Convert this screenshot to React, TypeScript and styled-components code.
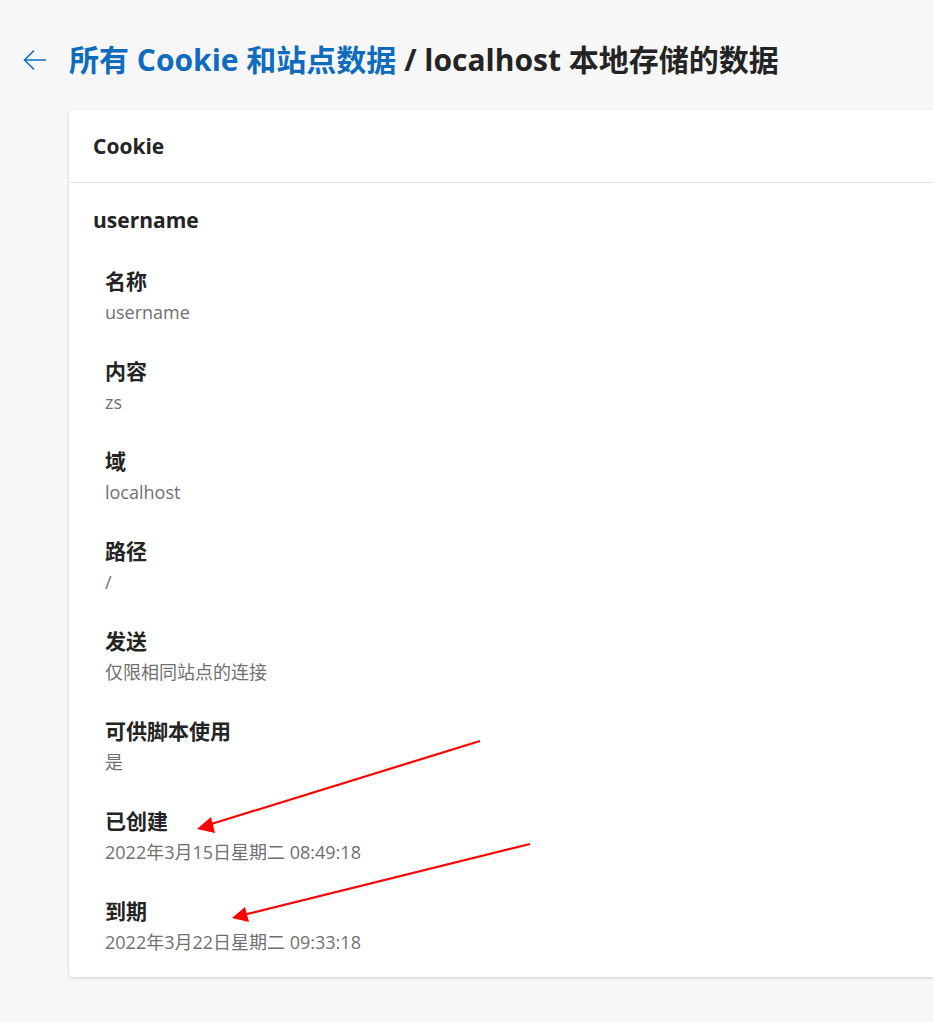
import styled, { createGlobalStyle } from 'styled-components'

const GlobalStyle = createGlobalStyle`
  html, body {
    margin: 0;
    padding: 0;
    background: #f7f7f7;
    overflow: hidden;
  }
  body {
    font-family: 'Open Sans', 'Noto Sans CJK SC', sans-serif;
    color: #242424;
  }
`

const Page = styled.div`
	position: relative;
	width: 933px;
	height: 1022px;
	padding-top: 40px;
	box-sizing: border-box;
`

const TitleBar = styled.div`
	display: flex;
	align-items: center;
	height: 40px;
	padding-left: 22px;
	gap: 21px;
`

const BackButton = styled.button`
	display: flex;
	align-items: center;
	justify-content: center;
	width: 26px;
	height: 26px;
	padding: 0;
	border: none;
	background: none;
	color: #0f6cbd;
	cursor: pointer;
`

const Title = styled.h1`
	margin: 0;
	font-size: 30px;
	line-height: 40px;
	font-weight: 700;
	white-space: nowrap;
	color: #242424;
`

const Crumb = styled.a`
	color: #0f6cbd;
	text-decoration: none;
`

const Card = styled.div`
	margin: 30px 0 0 69px;
	width: 900px;
	background: #fff;
	border-radius: 4px;
	box-shadow: 0 1px 3px rgba(0, 0, 0, 0.16), 0 0 1px rgba(0, 0, 0, 0.1);
`

const CardHeader = styled.div`
	display: flex;
	align-items: center;
	height: 72px;
	padding: 0 24px;
	border-bottom: 1px solid #e5e5e5;
	font-size: 21px;
	font-weight: 700;
`

const CardBody = styled.div`
	padding: 19px 24px 23px;
`

const CookieName = styled.div`
	font-size: 21px;
	font-weight: 700;
	line-height: 36px;
`

const Props = styled.dl`
	display: flex;
	flex-direction: column;
	gap: 33px;
	margin: 29px 0 0;
	padding-left: 12px;
`

const Prop = styled.div`
	display: flex;
	flex-direction: column;
	gap: 5px;
`

const Label = styled.dt`
	font-size: 21px;
	line-height: 28px;
	font-weight: 700;
	color: #242424;
`

const Value = styled.dd`
	margin: 0;
	font-size: 18px;
	line-height: 24px;
	color: #707070;
`

const Annotations = styled.svg`
	position: absolute;
	top: 0;
	left: 0;
	pointer-events: none;
`

const rows = [
	['名称', 'username'],
	['内容', 'zs'],
	['域', 'localhost'],
	['路径', '/'],
	['发送', '仅限相同站点的连接'],
	['可供脚本使用', '是'],
	['已创建', '2022年3月15日星期二 08:49:18'],
	['到期', '2022年3月22日星期二 09:33:18'],
]

function App() {
	return (
		<>
			<GlobalStyle />
			<Page>
				<TitleBar>
					<BackButton aria-label="返回">
						<svg width="26" height="26" viewBox="0 0 26 26" fill="none">
							<path
								d="M24 13H2.5M12 3.5L2.5 13l9.5 9.5"
								stroke="currentColor"
								strokeWidth="1.6"
							/>
						</svg>
					</BackButton>
					<Title>
						<Crumb href="#">所有 Cookie 和站点数据</Crumb> / localhost 本地存储的数据
					</Title>
				</TitleBar>

				<Card>
					<CardHeader>Cookie</CardHeader>
					<CardBody>
						<CookieName>username</CookieName>
						<Props>
							{rows.map(([label, value]) => (
								<Prop key={label}>
									<Label>{label}</Label>
									<Value>{value}</Value>
								</Prop>
							))}
						</Props>
					</CardBody>
				</Card>

				{/* red annotation arrows */}
				<Annotations width="933" height="1022" viewBox="0 0 933 1022">
					<line x1="480" y1="741" x2="208" y2="825" stroke="#f00" strokeWidth="2.2" />
					<polygon points="197,829 211,817 215,833" fill="#f00" />
					<line x1="530" y1="844" x2="243" y2="915" stroke="#f00" strokeWidth="2.2" />
					<polygon points="232,918 245,907 249,922" fill="#f00" />
				</Annotations>
			</Page>
		</>
	)
}

export default App
